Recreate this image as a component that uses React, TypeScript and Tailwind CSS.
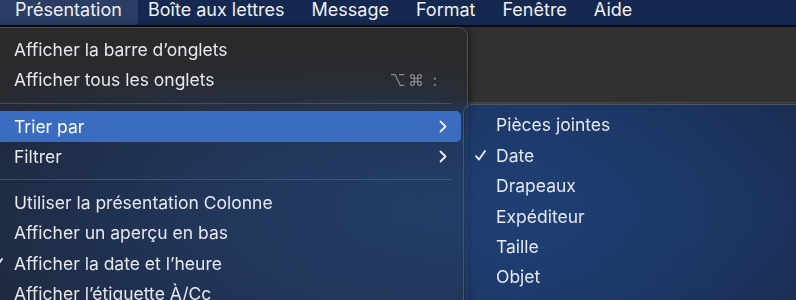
import { ReactNode } from "react";

const font = { fontFamily: "Inter, 'Liberation Sans', sans-serif" };

const Check = ({ className }: { className?: string }) => (
  <svg className={className} width="11" height="11" viewBox="0 0 11 11" fill="none">
    <path d="M1 6.2 L4 9.5 L10 1" stroke="currentColor" strokeWidth="1.9" strokeLinecap="round" strokeLinejoin="round" />
  </svg>
);

const Chevron = () => (
  <svg width="8" height="13" viewBox="0 0 8 13" fill="none" className="text-[#e9ebf0]">
    <path d="M1.5 1.5 L6.5 6.5 L1.5 11.5" stroke="currentColor" strokeWidth="1.9" strokeLinecap="round" strokeLinejoin="round" />
  </svg>
);

const Row = ({
  children,
  checked,
  right,
  active,
}: {
  children: ReactNode;
  checked?: boolean;
  right?: ReactNode;
  active?: boolean;
}) => (
  <div
    className={
      "relative flex items-center h-[30.5px] pl-[14px] pr-[14px] mr-[6px] rounded-r-[5px] " +
      (active ? "bg-[#3a6cc0] text-white" : "text-[#e6e8ee]")
    }
  >
    {checked && <Check className="absolute left-[-8px] top-[10px] text-[#e6e8ee]" />}
    <span className="flex-1 text-[17.5px] leading-none">{children}</span>
    {right}
  </div>
);

const Separator = ({ h }: { h: string }) => (
  <div className={"flex items-center pr-[16px] " + h}>
    <div className="h-px w-full bg-white/15" />
  </div>
);

const SubRow = ({ children, checked }: { children: ReactNode; checked?: boolean }) => (
  <div className="flex items-center h-[30.4px] text-[#e6e8ee]">
    <div className="w-[32px] flex justify-end pr-[10px]">{checked && <Check />}</div>
    <span className="text-[17.5px] leading-none">{children}</span>
  </div>
);

export default function App() {
  const menus = ["Boîte aux lettres", "Message", "Format", "Fenêtre", "Aide"];
  return (
    <div
      style={font}
      className="relative w-[796px] h-[300px] overflow-hidden bg-[radial-gradient(ellipse_75%_85%_at_55%_70%,#2456a0_0%,#1f4482_45%,#1b2f55_80%,#18243d_100%)]"
    >
      {/* menu bar */}
      <div className="flex items-start h-[25px] bg-[#15284f] text-[#eef0f5] text-[18px]">
        <div className="w-[138px] h-[25px] pl-[15px] bg-[#2b3d65] rounded-br-[4px] leading-[20px]">Présentation</div>
        <div className="flex ml-[10px] gap-[27px] leading-[20px]">
          {menus.map((m) => (
            <span key={m}>{m}</span>
          ))}
        </div>
      </div>
      <div className="h-[2px] bg-[#0c0c0e]" />
      {/* window behind */}
      <div className="h-[76px] bg-[#313132] border-b border-[#444446]" />

      {/* main dropdown */}
      <div className="absolute left-0 top-[27px] w-[468px] h-[290px] rounded-tr-[9px] border-r border-t border-[#505055] bg-[#232326]/45 backdrop-blur-xl shadow-[2px_0_6px_rgba(0,0,0,0.45)]">
        <div className="pt-[6px]">
          <Row>Afficher la barre d’onglets</Row>
          <Row right={<span className="text-[16px] text-[#8c8c92] mr-[8px] tracking-[2px]">⌥⌘ :</span>}>
            Afficher tous les onglets
          </Row>
          <Separator h="h-[16px]" />
          <Row active right={<Chevron />}>
            Trier par
          </Row>
          <Row right={<Chevron />}>Filtrer</Row>
          <Separator h="h-[15px]" />
          <Row>Utiliser la présentation Colonne</Row>
          <Row>Afficher un aperçu en bas</Row>
          <Row checked>Afficher la date et l’heure</Row>
          <Row>Afficher l’étiquette À/Cc</Row>
        </div>
      </div>

      {/* submenu */}
      <div className="absolute left-[463px] top-[104px] w-[360px] h-[220px] rounded-tl-[9px] border-l border-t border-[#4d5462] bg-[#1b2336]/35 backdrop-blur-xl pt-[5px]">
        <SubRow>Pièces jointes</SubRow>
        <SubRow checked>Date</SubRow>
        <SubRow>Drapeaux</SubRow>
        <SubRow>Expéditeur</SubRow>
        <SubRow>Taille</SubRow>
        <SubRow>Objet</SubRow>
      </div>
    </div>
  );
}
